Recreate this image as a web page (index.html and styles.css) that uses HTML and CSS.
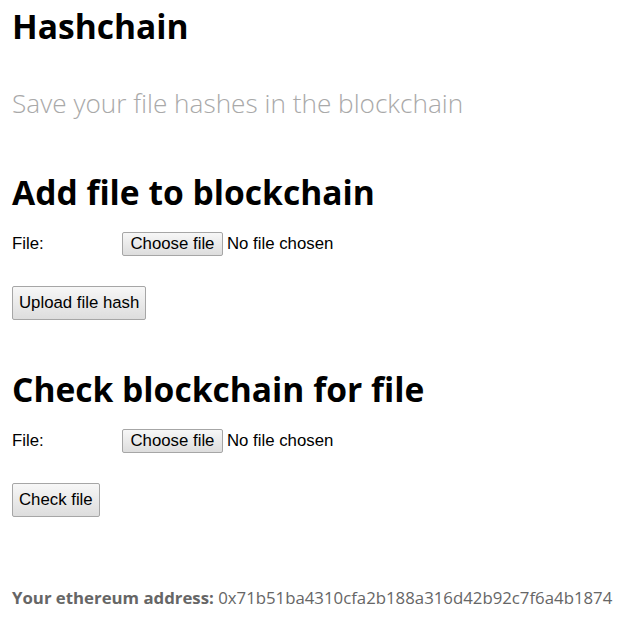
FILE: index.html
```html
<!DOCTYPE html>
<html>
<head>
<meta charset="utf-8">
<link rel="stylesheet" href="styles.css">
</head>
<body>
<header class="header">
  <h1 class="title">Hashchain</h1>
  <p class="subtitle">Save your file hashes in the blockchain</p>
</header>
<section class="section">
  <h2 class="section-title">Add file to blockchain</h2>
  <div class="row">
    <label class="label">File:</label>
    <span class="file">
      <button class="btn choose" type="button">Choose file</button>
      <span class="file-name">No file chosen</span>
    </span>
  </div>
  <button class="btn action" type="button">Upload file hash</button>
</section>
<section class="section">
  <h2 class="section-title">Check blockchain for file</h2>
  <div class="row">
    <label class="label">File:</label>
    <span class="file">
      <button class="btn choose" type="button">Choose file</button>
      <span class="file-name">No file chosen</span>
    </span>
  </div>
  <button class="btn action" type="button">Check file</button>
</section>
<footer class="footer"><strong>Your ethereum address:</strong> 0x71b51ba4310cfa2b188a316d42b92c7f6a4b1874</footer>
</body>
</html>
```

FILE: styles.css
```css
html, body {
  margin: 0;
  padding: 0;
  background: #fff;
}
body {
  padding: 0 12px;
  font-family: "Open Sans", sans-serif;
  font-size: 16.8px;
  color: #000;
}
.title {
  font-size: 33.6px;
  font-weight: 700;
  line-height: 40px;
  margin: 0;
  padding-top: 6px;
}
.subtitle {
  font-size: 26.2px;
  font-weight: 300;
  line-height: 32px;
  color: #a9a9a9;
  margin: 41px 0 0;
}
.section {
  display: flex;
  flex-direction: column;
  align-items: flex-start;
  margin-top: 53px;
}
.section + .section {
  margin-top: 49px;
}
.section-title {
  font-size: 33.6px;
  font-weight: 700;
  line-height: 40px;
  margin: 0;
}
.row {
  display: flex;
  align-items: center;
  margin-top: 20px;
  font-family: "Liberation Sans", Arial, sans-serif;
  font-size: 16.8px;
  line-height: 20px;
}
.label {
  width: 110px;
}
.file {
  display: flex;
  align-items: center;
  gap: 4px;
}
.btn {
  font-family: "Liberation Sans", Arial, sans-serif;
  font-size: 16.8px;
  line-height: 20px;
  color: #000;
  border: 1px solid #a6a6a6;
  border-radius: 2px;
  background: linear-gradient(#f7f7f7, #dddddd);
  margin: 0;
}
.choose {
  padding: 1px 7.5px;
}
.action {
  padding: 6px 6px;
  margin-top: 30px;
}
.footer {
  margin-top: 69px;
  font-size: 16.8px;
  line-height: 24px;
  color: #666;
  white-space: nowrap;
}
.footer strong {
  font-weight: 700;
}
```
